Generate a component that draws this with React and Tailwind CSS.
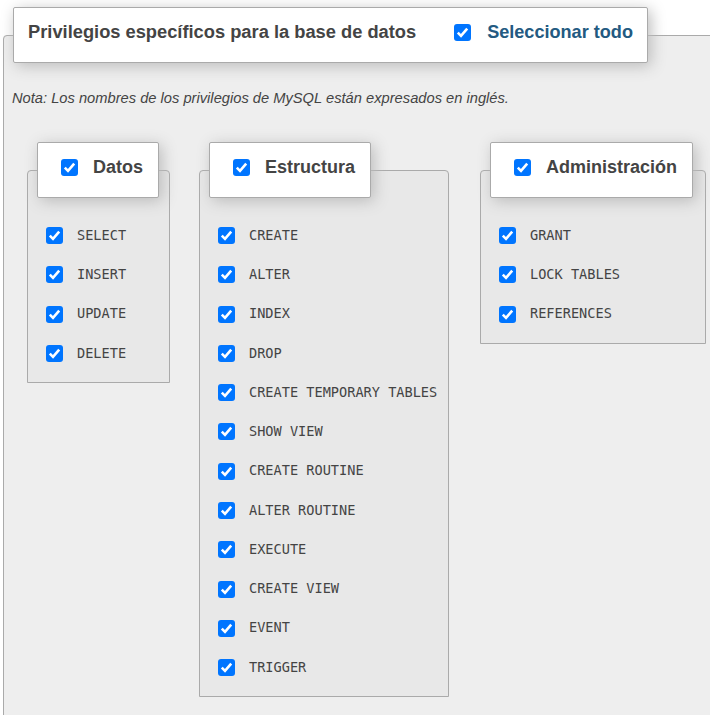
import React from "react";

function Check() {
  return (
    <svg width="17" height="17" viewBox="0 0 17 17" className="shrink-0 block">
      <rect x="0" y="0" width="17" height="17" rx="3" fill="#0075ff" />
      <path d="M3.8 8.6 L7 11.8 L13.2 4.6" fill="none" stroke="#fff" strokeWidth="2.6" strokeLinecap="butt" strokeLinejoin="miter" />
    </svg>
  );
}

const groups = [
  { title: "Datos", w: "w-[143px]", ml: "ml-[14px]", items: ["SELECT", "INSERT", "UPDATE", "DELETE"] },
  {
    title: "Estructura",
    w: "w-[250px]",
    ml: "ml-[29px]",
    items: [
      "CREATE",
      "ALTER",
      "INDEX",
      "DROP",
      "CREATE TEMPORARY TABLES",
      "SHOW VIEW",
      "CREATE ROUTINE",
      "ALTER ROUTINE",
      "EXECUTE",
      "CREATE VIEW",
      "EVENT",
      "TRIGGER",
    ],
  },
  { title: "Administración", w: "w-[226px]", ml: "ml-[31px]", items: ["GRANT", "LOCK TABLES", "REFERENCES"] },
];

export default function App() {
  return (
    <div className="w-[710px] h-[715px] overflow-hidden bg-white font-['Liberation_Sans',Arial,sans-serif] text-[#444]">
      <fieldset className="ml-[3px] mt-[7px] w-[760px] min-h-[760px] border border-[#aaa] rounded-tl-[4px] bg-[#eee] px-[9px] pb-4">
        <legend className="border border-[#aaa] rounded-[2px] bg-white shadow-[3px_3px_15px_#bbb] pl-[14px] pr-[14px] pt-[12px] pb-[18px]">
          <div className="flex items-center leading-[24px] text-[18px] font-bold">
            <span className="text-[#444] text-[18.3px]">Privilegios específicos para la base de datos</span>
            <span className="ml-[38px]"><Check /></span>
            <span className="ml-[16px] text-[#235a81] text-[18.1px]">Seleccionar todo</span>
          </div>
        </legend>
        <p className="mt-[25px] ml-[-1px] text-[14.7px] leading-[20px] italic text-[#444]">
          Nota: Los nombres de los privilegios de MySQL están expresados en inglés.
        </p>
        <div className="flex items-start mt-[34px]">
          {groups.map((g) => (
            <fieldset
              key={g.title}
              className={`${g.w} ${g.ml} shrink-0 border border-[#aaa] rounded-t-[4px] bg-[#e8e8e8] px-[9px] pb-[9px]`}
            >
              <legend className="border border-[#aaa] rounded-[2px] bg-white shadow-[3px_3px_15px_#bbb] pl-[23px] pr-[15px] pt-[12px] pb-[18px]">
                <div className="flex items-center gap-[15px] leading-[24px] text-[18px] font-bold text-[#444]">
                  <Check />
                  <span>{g.title}</span>
                </div>
              </legend>
              <div className="mt-[18px] pl-[9px]">
                {g.items.map((it) => (
                  <div key={it} className="h-[39.27px] flex items-center gap-[14px]">
                    <Check />
                    <span className="font-['DejaVu_Sans_Mono',monospace] text-[13.6px] leading-none text-[#444] whitespace-pre">
                      {it}
                    </span>
                  </div>
                ))}
              </div>
            </fieldset>
          ))}
        </div>
      </fieldset>
    </div>
  );
}
